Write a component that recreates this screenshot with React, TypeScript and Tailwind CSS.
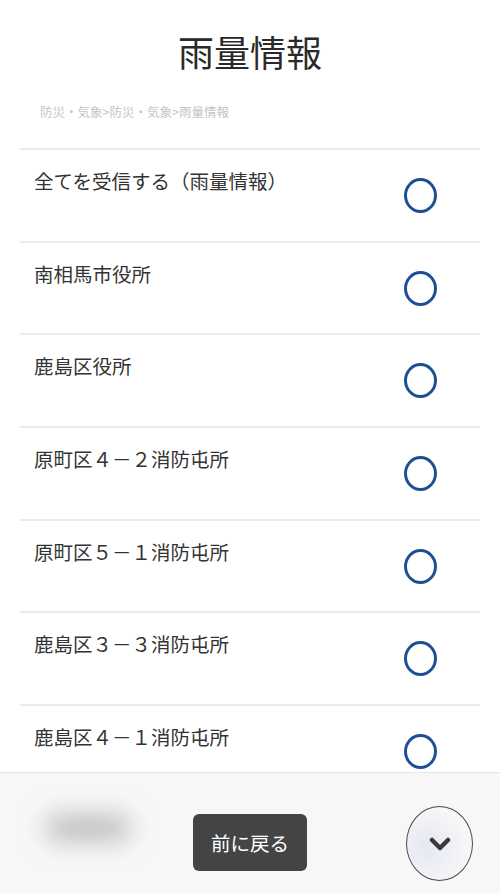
import React from "react";

const ITEMS = [
  "全てを受信する（雨量情報）",
  "南相馬市役所",
  "鹿島区役所",
  "原町区４－２消防屯所",
  "原町区５－１消防屯所",
  "鹿島区３－３消防屯所",
  "鹿島区４－１消防屯所",
];

const FONT = { fontFamily: '"Noto Sans CJK JP", "Noto Sans", sans-serif' };

function Radio() {
  return (
    <span className="mt-[28px] mr-[43px] block h-[35px] w-[33px] shrink-0 rounded-[50%] border-[3px] border-[#1d4f96]" />
  );
}

export default function App() {
  return (
    <div className="min-h-screen bg-white text-[#333]" style={FONT}>
      <div className="px-5 pb-[140px]">
        <h1 className="pt-[33px] text-center text-[36px] leading-[36px] font-normal text-[#2a2a2a]">
          雨量情報
        </h1>
        <p className="mt-[35px] pl-5 text-[12.5px] leading-[16px] text-[#c4c4c4]">
          防災・気象&gt;防災・気象&gt;雨量情報
        </p>
        <ul className="mt-[28px]">
          {ITEMS.map((item) => (
            <li
              key={item}
              className="flex h-[92.67px] items-start justify-between border-t-2 border-[#ebebeb]"
            >
              <span className="pt-[17px] pl-[14px] text-[19.5px] leading-[28px] text-[#333]">
                {item}
              </span>
              <Radio />
            </li>
          ))}
        </ul>
      </div>

      {/* bottom bar */}
      <div className="fixed bottom-0 left-0 right-0 h-[121px] border-t border-[#e6e6e6] bg-[#f7f7f7]">
        <div className="relative flex h-full items-start">
          <div className="absolute left-[46px] top-[42px] h-[26px] w-[84px] rounded-full bg-[#bdbdbd] blur-[12px]" />
          <button className="ml-[193px] mt-[41px] flex h-[57px] w-[114px] items-center justify-center rounded-[6px] bg-[#444] text-[19.5px] text-white">
            前に戻る
          </button>
          <button className="ml-auto mr-[27px] mt-[33px] flex h-[75px] w-[67px] items-center justify-center rounded-[50%] border-[1.5px] border-[#4a4a4a] bg-[radial-gradient(circle_at_30%_55%,#e4e8f1,#f7f7f8_70%)]">
            <svg width="22" height="14" viewBox="0 0 22 14">
              <path
                d="M3 3 L11 11 L19 3"
                fill="none"
                stroke="#3a3a3a"
                strokeWidth="4.5"
                strokeLinecap="round"
                strokeLinejoin="round"
              />
            </svg>
          </button>
        </div>
      </div>
    </div>
  );
}
